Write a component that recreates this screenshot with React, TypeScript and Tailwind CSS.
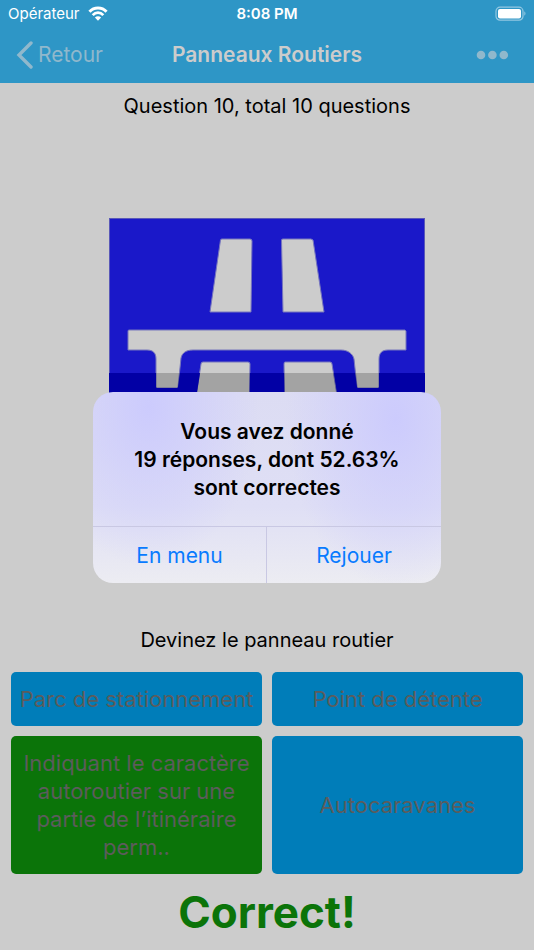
import React from "react"

const answers = [
  { label: "Parc de stationnement", correct: false },
  { label: "Point de détente", correct: false },
  { label: "Indiquant le caractère autoroutier sur une partie de l’itinéraire perm..", correct: true },
  { label: "Autocaravanes", correct: false },
]

function StatusBar() {
  return (
    <div className="grid h-7 grid-cols-3 items-center px-2 text-white">
      <div className="flex items-center gap-x-2 text-[15px]">
        <span>Opérateur</span>
        <svg width="20" height="16" viewBox="0 0 20 16" fill="none" aria-hidden="true">
          <path d="M1.5 5.800C6 0.700 14 0.700 18.500 5.800" stroke="currentColor" strokeWidth="3" />
          <path d="M4.700 9.200C7.800 5.800 12.200 5.800 15.300 9.200" stroke="currentColor" strokeWidth="2.700" />
          <path d="M10 14.700L6.900 11.500C8.700 9.800 11.300 9.800 13.100 11.500Z" fill="currentColor" />
        </svg>
      </div>
      <span className="text-center text-[15px] font-semibold">8:08 PM</span>
      <svg className="justify-self-end" width="32" height="16" viewBox="0 0 32 16" fill="none" aria-hidden="true">
        <rect x="2" y="1.2" width="27" height="13" rx="4" stroke="#93c8e2" strokeWidth="1.2" />
        <rect x="4" y="3" width="23" height="9.400" rx="2" fill="#fff" />
        <path d="M30.300 5.300C31.900 6.100 31.900 8.900 30.300 9.700Z" fill="#93c8e2" />
      </svg>
    </div>
  )
}

function NavBar() {
  return (
    <nav className="grid h-[55px] grid-cols-[1fr_auto_1fr] items-center px-4 pb-[2px]">
      <a href="#" className="flex items-center gap-x-1 text-[21px] text-[#90b8cc]">
        <svg width="18" height="28" viewBox="0 0 18 28" fill="none" aria-hidden="true">
          <path d="M15 2L3 14L15 26" stroke="currentColor" strokeWidth="3.4" strokeLinecap="round" />
        </svg>
        Retour
      </a>
      <h1 className="text-[21px] font-semibold text-[#cccccc]">Panneaux Routiers</h1>
      <button type="button" aria-label="Menu" className="justify-self-end px-2 text-[#90b8cc]">
        <svg width="34" height="10" viewBox="0 0 34 10" fill="currentColor" aria-hidden="true">
          <circle cx="5" cy="5" r="4.3" />
          <circle cx="16.400" cy="5" r="4.3" />
          <circle cx="27.800" cy="5" r="4.3" />
        </svg>
      </button>
    </nav>
  )
}

function RoadSign() {
  return (
    <svg className="w-[316px]" viewBox="0 0 316 316" role="img" aria-label="Panneau routier">
      <rect x="0.5" y="0.5" width="315" height="315" fill="#1a18c9" stroke="#5958b8" />
      <g fill="#cccccc" stroke="#7776bd" strokeWidth="1">
        <path d="M113 21H141Q143 21 143 23L142 94H101L111.500 22Q111.700 21 113 21Z" />
        <path d="M174 21H202L204 22L215 94H174L172.500 22Q172.500 21 174 21Z" />
        <path d="M20 112H296L297 113V132H279C273 132 270 135 270 141V169Q270 170 269 170H249Q248 170 248 169L245 141C244 136 239 132 232 132H84C77 132 73 135 72 140L69 169Q69 170 68 170H48Q47 170 47 169V141C47 135 44 132 38 132H19V113Q19 112 20 112Z" />
        <path d="M94 144H139Q141 144 141 146L139 290H70L92 146Q92 144 94 144Z" />
        <path d="M176 144H221Q223 144 223 146L246 290H177L175 146Q175 144 176 144Z" />
      </g>
      <rect y="155" width="316" height="161" fill="#000000" opacity="0.2" />
      <path d="M0 155H316V316H0ZM47 155V169Q47 170 48 170H68Q69 170 69 169L71 155ZM91 155L70 290H139L141 155ZM175 155L177 290H246L225 155ZM246 155L248 169Q248 170 249 170H269Q270 170 270 169V155Z" fill="#0200a5" fillRule="evenodd" />
    </svg>
  )
}

function ResultDialog() {
  return (
    <div className="absolute inset-0 flex items-center justify-center pt-6">
      <div
        role="alertdialog"
        aria-labelledby="result-title"
        className="w-[348px] overflow-hidden rounded-[20px] bg-[radial-gradient(ellipse_110px_160px_at_16%_8%,#cccbfd,transparent),radial-gradient(ellipse_110px_170px_at_87%_14%,#cccbfd,transparent),linear-gradient(#dcdcf3,#dfdff5_60%,#ececf2)]"
      >
        <h2 id="result-title" className="px-6 pt-[26px] pb-6 text-center text-[21px] leading-[28px] font-semibold text-black">
          Vous avez donné
          <br />
          19 réponses, dont 52.63%
          <br />
          sont correctes
        </h2>
        <div className="grid grid-cols-2 divide-x divide-[#c9c8e3] border-t border-[#c9c8e3] text-[21px] text-[#087bff]">
          <button type="button" className="h-14 pt-[2px]">En menu</button>
          <button type="button" className="h-14 pt-[2px]">Rejouer</button>
        </div>
      </div>
    </div>
  )
}

export default function App() {
  return (
    <div className="relative flex min-h-screen flex-col bg-[#cccccc] font-['Inter',sans-serif] text-black">
      <header className="bg-[#2e96c6]">
        <StatusBar />
        <NavBar />
      </header>
      <main className="flex flex-1 flex-col px-[11px] text-center">
        <p className="pt-2 pb-[5px] text-[20px] leading-[30px]">Question 10, total 10 questions</p>
        <div className="flex flex-1 items-center justify-center">
          <RoadSign />
        </div>
        <p className="pb-[17px] text-[20px] leading-[30px]">Devinez le panneau routier</p>
        <div className="grid grid-cols-2 gap-[10px]">
          {answers.map((answer) => (
            <button
              key={answer.label}
              type="button"
              className={`rounded-[5px] px-1 py-[13px] text-[22px] leading-[28px] text-[#5c5c5c] ${
                answer.correct ? "bg-[#0b7409]" : "bg-[#007db9]"
              }`}
            >
              {answer.label}
            </button>
          ))}
        </div>
        <p className="py-2 text-[44px] leading-[60px] font-bold text-[#0b7409]">Correct!</p>
      </main>
      <ResultDialog />
    </div>
  )
}
